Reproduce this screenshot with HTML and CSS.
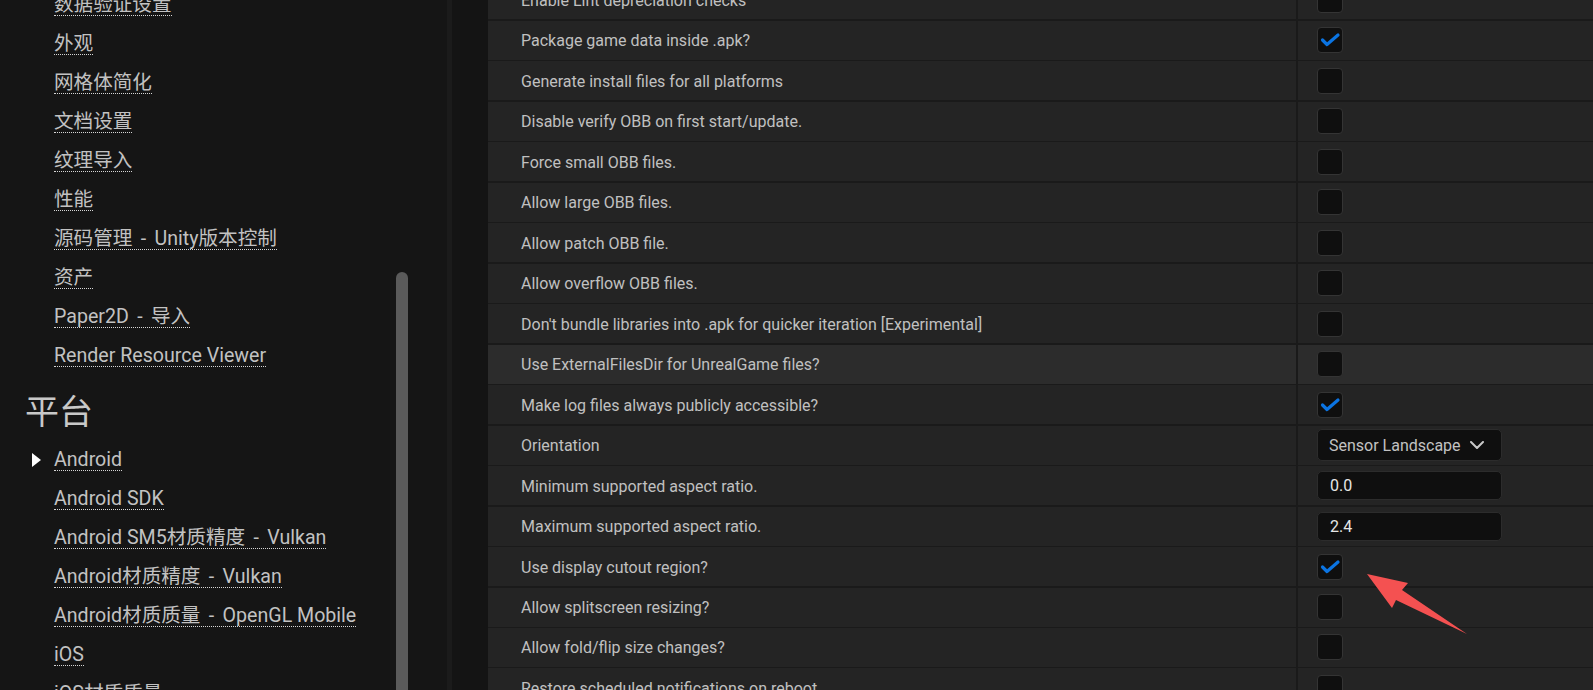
FILE: index.html
```html
<!DOCTYPE html>
<html lang="zh-CN">
<head>
<meta charset="utf-8">
<title>Project Settings</title>
<link rel="stylesheet" href="styles.css">
</head>
<body>
<div class="app">
  <aside class="side">
    <nav class="nav">
      <div class="item"><span class="lnk">数据验证设置</span></div>
      <div class="item"><span class="lnk">外观</span></div>
      <div class="item"><span class="lnk">网格体简化</span></div>
      <div class="item"><span class="lnk">文档设置</span></div>
      <div class="item"><span class="lnk">纹理导入</span></div>
      <div class="item"><span class="lnk">性能</span></div>
      <div class="item"><span class="lnk">源码管理<span class="dash"> - </span>Unity版本控制</span></div>
      <div class="item"><span class="lnk">资产</span></div>
      <div class="item"><span class="lnk">Paper2D<span class="dash"> - </span>导入</span></div>
      <div class="item"><span class="lnk">Render Resource Viewer</span></div>
      <div class="head">平台</div>
      <div class="item"><span class="tri"></span><span class="lnk">Android</span></div>
      <div class="item"><span class="lnk">Android SDK</span></div>
      <div class="item"><span class="lnk">Android SM5材质精度<span class="dash"> - </span>Vulkan</span></div>
      <div class="item"><span class="lnk">Android材质精度<span class="dash"> - </span>Vulkan</span></div>
      <div class="item"><span class="lnk">Android材质质量<span class="dash"> - </span>OpenGL Mobile</span></div>
      <div class="item"><span class="lnk">iOS</span></div>
      <div class="item"><span class="lnk">iOS材质质量</span></div>
    </nav>
    <div class="track"><div class="thumb"></div></div>
  </aside>
  <div class="splitter"></div>
  <div class="gutter"></div>
  <main class="rows">
    <div class="row"><div class="label">Enable Lint depreciation checks</div><div class="value"><span class="cb"></span></div></div>
    <div class="row"><div class="label">Package game data inside .apk?</div><div class="value"><span class="cb"><svg viewBox="0 0 26 26" width="26" height="26"><polyline class="tick" points="5.5,13 10,17.5 21,8"/></svg></span></div></div>
    <div class="row"><div class="label">Generate install files for all platforms</div><div class="value"><span class="cb"></span></div></div>
    <div class="row"><div class="label">Disable verify OBB on first start/update.</div><div class="value"><span class="cb"></span></div></div>
    <div class="row"><div class="label">Force small OBB files.</div><div class="value"><span class="cb"></span></div></div>
    <div class="row"><div class="label">Allow large OBB files.</div><div class="value"><span class="cb"></span></div></div>
    <div class="row"><div class="label">Allow patch OBB file.</div><div class="value"><span class="cb"></span></div></div>
    <div class="row"><div class="label">Allow overflow OBB files.</div><div class="value"><span class="cb"></span></div></div>
    <div class="row"><div class="label">Don't bundle libraries into .apk for quicker iteration [Experimental]</div><div class="value"><span class="cb"></span></div></div>
    <div class="row hover"><div class="label">Use ExternalFilesDir for UnrealGame files?</div><div class="value"><span class="cb"></span></div></div>
    <div class="row"><div class="label">Make log files always publicly accessible?</div><div class="value"><span class="cb"><svg viewBox="0 0 26 26" width="26" height="26"><polyline class="tick" points="5.5,13 10,17.5 21,8"/></svg></span></div></div>
    <div class="row"><div class="label">Orientation</div><div class="value"><span class="combo">Sensor Landscape<svg class="chev" viewBox="0 0 14 8" width="14" height="8"><polyline points="1,1 7,7 13,1"/></svg></span></div></div>
    <div class="row"><div class="label">Minimum supported aspect ratio.</div><div class="value"><span class="field">0.0</span></div></div>
    <div class="row"><div class="label">Maximum supported aspect ratio.</div><div class="value"><span class="field">2.4</span></div></div>
    <div class="row"><div class="label">Use display cutout region?</div><div class="value"><span class="cb"><svg viewBox="0 0 26 26" width="26" height="26"><polyline class="tick" points="5.5,13 10,17.5 21,8"/></svg></span></div></div>
    <div class="row"><div class="label">Allow splitscreen resizing?</div><div class="value"><span class="cb"></span></div></div>
    <div class="row"><div class="label">Allow fold/flip size changes?</div><div class="value"><span class="cb"></span></div></div>
    <div class="row"><div class="label">Restore scheduled notifications on reboot</div><div class="value"><span class="cb"></span></div></div>
  </main>
</div>
<svg class="arrow" width="1593" height="690" viewBox="0 0 1593 690"><polygon points="1367,574 1408,583 1402,590 1467,634 1396,600 1392,608"/></svg>
</body>
</html>
```
FILE: styles.css
```css
html, body {
  margin: 0;
  padding: 0;
}
body {
  width: 1593px;
  height: 690px;
  overflow: hidden;
  background: #151515;
  font-family: "Roboto", "Noto Sans CJK SC", sans-serif;
  position: relative;
}
.app {
  display: flex;
  height: 690px;
  overflow: hidden;
}
.side {
  width: 447px;
  flex: none;
  display: flex;
  background: #151515;
  overflow: hidden;
}
.nav {
  width: 396px;
  flex: none;
  margin-top: -23px;
  display: flex;
  flex-direction: column;
}
.item {
  height: 39px;
  flex: none;
  display: flex;
  align-items: flex-end;
  padding-left: 54px;
  box-sizing: border-box;
  font-size: 19.6px;
  color: #c2c2c2;
  white-space: nowrap;
}
.lnk {
  display: inline-block;
  line-height: 20px;
  border-bottom: 1px dotted #d6d6d6;
}
.dash {
  padding: 0 3.5px;
}
.tri {
  width: 0;
  height: 0;
  border-style: solid;
  border-width: 7px 0 7px 9px;
  border-color: transparent transparent transparent #ffffff;
  margin-left: -22px;
  margin-right: 13px;
  margin-bottom: 4px;
}
.head {
  flex: none;
  padding: 26px 0 4.7px 25px;
  font-size: 34px;
  line-height: 34px;
  color: #c8c8c8;
  font-family: "Noto Sans CJK SC", sans-serif;
}
.track {
  width: 12px;
  flex: none;
  padding-top: 272px;
  margin-right: 39px;
}
.thumb {
  height: 600px;
  background: #5a5a5a;
  border-radius: 6px;
}
.splitter {
  width: 5px;
  flex: none;
  background: #1b1b1b;
}
.gutter {
  width: 36px;
  flex: none;
  background: #141414;
}
.rows {
  flex: 1;
  display: flex;
  flex-direction: column;
  gap: 1.5px;
  margin-top: -19.5px;
  background: #1a1a1a;
}
.row {
  height: 38.97px;
  flex: none;
  display: flex;
  background: #242424;
}
.row.hover {
  background: #2c2c2c;
}
.label {
  width: 810px;
  flex: none;
  box-sizing: border-box;
  padding-left: 33px;
  padding-top: 1px;
  border-right: 2px solid #1a1a1a;
  display: flex;
  align-items: center;
  font-size: 16px;
  color: #c0c0c0;
  white-space: nowrap;
}
.value {
  flex: 1;
  display: flex;
  align-items: center;
  padding-left: 19px;
}
.cb {
  width: 26px;
  height: 26px;
  box-sizing: border-box;
  border: 1.3px solid #343434;
  border-radius: 4px;
  background: #0f0f0f;
  display: flex;
  align-items: center;
  justify-content: center;
}
.cb svg {
  flex: none;
}
.tick {
  fill: none;
  stroke: #0b74e2;
  stroke-width: 3.2;
  stroke-linecap: round;
  stroke-linejoin: round;
}
.combo {
  width: 185px;
  height: 32px;
  box-sizing: border-box;
  border: 1px solid #2c2c2c;
  border-radius: 5px;
  background: #0f0f0f;
  display: flex;
  align-items: center;
  padding-left: 11px;
  font-size: 16px;
  color: #c2c2c2;
  white-space: nowrap;
}
.chev {
  margin-left: 9px;
  fill: none;
  stroke: #c8c8c8;
  stroke-width: 2;
  stroke-linecap: round;
  stroke-linejoin: round;
}
.field {
  width: 185px;
  height: 29px;
  box-sizing: border-box;
  border: 1px solid #2c2c2c;
  border-radius: 5px;
  background: #0f0f0f;
  display: flex;
  align-items: center;
  padding-left: 12px;
  font-size: 16px;
  color: #e6e6e6;
}
.arrow {
  position: absolute;
  left: 0;
  top: 0;
  pointer-events: none;
}
.arrow polygon {
  fill: #f45151;
}
```
